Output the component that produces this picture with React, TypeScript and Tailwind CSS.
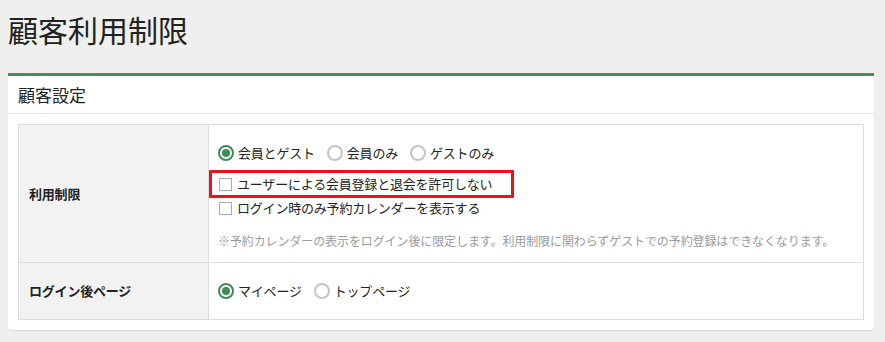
const font = "font-['Noto_Sans_CJK_JP','Noto_Sans',sans-serif]"

function Radio({ label, checked }: { label: string; checked?: boolean }) {
  return (
    <label className="flex items-center gap-[4px] mr-[12px]">
      <span
        className={`flex h-[16px] w-[16px] items-center justify-center rounded-full border-2 bg-white ${
          checked ? 'border-[#3d8b57]' : 'border-[#c4c4c4]'
        }`}
      >
        {checked && <span className="h-[8px] w-[8px] rounded-full bg-[#3d8b57]" />}
      </span>
      <span>{label}</span>
    </label>
  )
}

function Checkbox({ label }: { label: string }) {
  return (
    <label className="flex items-center gap-[5px]">
      <span className="ml-[1px] h-[13px] w-[13px] border border-[#aaa] bg-white" />
      <span>{label}</span>
    </label>
  )
}

export default function App() {
  return (
    <div className={`${font} min-h-[342px] bg-[#eff0ee] text-[#222] px-[8px]`}>
      <h1 className="pt-[9px] h-[73px] text-[30px] leading-[40px] text-[#222]">顧客利用制限</h1>
      <div className="mr-[3px] rounded-b-[4px] border-t-[3px] border-[#4a8a5c] bg-white shadow-[0_1px_1px_rgba(0,0,0,0.08)]">
        <div className="h-[38px] border-b border-[#e4e4e4] px-[10px] text-[17px] leading-[38px]">顧客設定</div>
        <div className="p-[10px]">
          <div className="border border-[#dcdcdc] text-[13px] tracking-[-0.2px]">
            <div className="flex h-[138px] border-b border-[#dcdcdc]">
              <div className="flex w-[190px] shrink-0 items-center border-r border-[#dcdcdc] bg-[#f2f2f2] px-[10px] font-bold">
                利用制限
              </div>
              <div className="flex-1 px-[9px] pt-[19px]">
                <div className="flex h-[18px] items-center">
                  <Radio label="会員とゲスト" checked />
                  <Radio label="会員のみ" />
                  <Radio label="ゲストのみ" />
                </div>
                <div className="relative mt-[13px] flex h-[18px] items-center">
                  <Checkbox label="ユーザーによる会員登録と退会を許可しない" />
                  <div className="absolute left-[-9px] top-[-5px] h-[28px] w-[305px] border-[3px] border-[#e8141c]" />
                </div>
                <div className="mt-[6px] flex h-[18px] items-center">
                  <Checkbox label="ログイン時のみ予約カレンダーを表示する" />
                </div>
                <div className="mt-[15px] text-[12px] tracking-[-0.1px] leading-[18px] text-[#9a9a9a]">
                  ※予約カレンダーの表示をログイン後に限定します。利用制限に関わらずゲストでの予約登録はできなくなります。
                </div>
              </div>
            </div>
            <div className="flex h-[56px]">
              <div className="flex w-[190px] shrink-0 items-center border-r border-[#dcdcdc] bg-[#f2f2f2] px-[10px] font-bold">
                ログイン後ページ
              </div>
              <div className="flex flex-1 items-center px-[9px]">
                <Radio label="マイページ" checked />
                <Radio label="トップページ" />
              </div>
            </div>
          </div>
        </div>
      </div>
    </div>
  )
}
